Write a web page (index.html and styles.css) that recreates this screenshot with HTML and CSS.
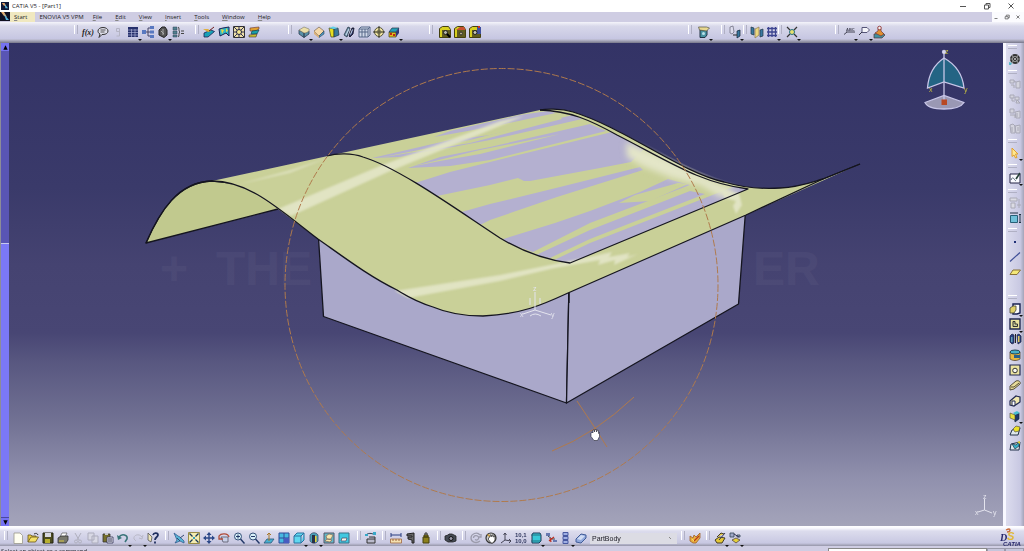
FILE: index.html
```html
<!DOCTYPE html>
<html lang="en">
<head>
<meta charset="utf-8">
<title>CATIA V5 - [Part1]</title>
<link rel="stylesheet" href="styles.css">
</head>
<body>
<header class="titlebar">
  <svg class="app-icon" viewBox="0 0 9 9"><path fill="#101838" d="M0 0h9v9H0z"/><path fill="#e8a060" d="M1 1l3 0 2 4-3-1z"/><path fill="#58b8e0" d="M4 2l4 5H5z"/></svg>
  <h1 class="title">CATIA V5 - [Part1]</h1>
  <div class="window-controls">
    <button aria-label="Minimize"><svg viewBox="0 0 8 8"><path d="M1 4.500h6"/></svg></button>
    <button aria-label="Restore"><svg viewBox="0 0 8 8"><path d="M1.500 3h4v4h-4zM3 3V1.500h4V5.500H5.500"/></svg></button>
    <button aria-label="Close"><svg viewBox="0 0 8 8"><path d="M1.500 1.500l5 5m0-5l-5 5"/></svg></button>
  </div>
</header>

<nav class="menubar">
  <svg class="doc-icon" viewBox="0 0 10 9"><path fill="#101020" d="M0 0h10v9H0z"/><path fill="#e8b070" d="M1 0h3l3 5-3-1z"/><path fill="#58b8e0" d="M4 2l5 6H6z"/></svg>
  <button class="menu menu-start"><u>S</u>tart</button>
  <button class="menu menu-wide">ENOVIA V5 VPM</button>
  <button class="menu"><u>F</u>ile</button>
  <button class="menu"><u>E</u>dit</button>
  <button class="menu"><u>V</u>iew</button>
  <button class="menu"><u>I</u>nsert</button>
  <button class="menu"><u>T</u>ools</button>
  <button class="menu"><u>W</u>indow</button>
  <button class="menu"><u>H</u>elp</button>
  <div class="doc-controls">
    <button aria-label="Minimize document"><svg viewBox="0 0 8 8"><path d="M2 6h4"/></svg></button>
    <button aria-label="Restore document"><svg viewBox="0 0 8 8"><path d="M1.500 3.500h4v3h-4zM3 3V1.500h4V5H5.500"/></svg></button>
    <button aria-label="Close document"><svg viewBox="0 0 8 8"><path d="M2 2l4 4m0-4l-4 4"/></svg></button>
  </div>
</nav>

<div class="toolbar toolbar-top" role="toolbar" aria-label="Main tools">
  <div class="group">
    <button class="tool" aria-label="Formula"><svg viewBox="0 0 12 12"><text class="fx" x="0" y="9">f(x)</text></svg></button>
    <button class="tool" aria-label="Comment"><svg viewBox="0 0 12 12"><path fill="#dcdce8" stroke="#333" d="M6 1.500c3 0 5 1.500 5 3.500S9 8.500 6 8.500H5l-3 3 1-3.500C1.500 7.500 1 6 1 5c0-2 2-3.500 5-3.500z"/><path stroke="#555" d="M3.500 4h5M3.500 6h4"/></svg></button>
    <button class="tool" aria-label="Lock"><svg viewBox="0 0 12 12"><path fill="none" stroke="#b4b4c4" d="M4.500 2.500h3v3h-3zM7.500 5v5h-3"/></svg></button>
    <button class="tool more" aria-label="Design table"><svg viewBox="0 0 12 12"><path fill="#26306c" d="M1 1h10v10H1z"/><path stroke="#b8bce0" stroke-width=".6" d="M1 4h10M1 6.500h10M1 9h10M4.500 3v8M8 3v8"/></svg></button>
    <button class="tool" aria-label="Tree"><svg viewBox="0 0 12 12"><path fill="none" stroke="#446" d="M3 6h3m3-4H6v8h3M6 6h3"/><path fill="#5878c0" d="M0 4h4v4H0zM8 0h4v3H8zM8 4.500h4v3H8zM8 9h4v3H8z"/></svg></button>
    <button class="tool more" aria-label="Knowledge lock"><svg viewBox="0 0 12 12"><path fill="#555" stroke="#222" d="M2 4l3-3h3l2 3v5l-3 2.500L2 9z"/><path stroke="#aaa" d="M4 5l3 3M6 3v6"/></svg></button>
    <button class="tool" aria-label="Equivalent dimensions"><svg viewBox="0 0 12 12"><path fill="#508090" stroke="#345" stroke-width=".5" d="M1 1h4v3H1zM1 5h4v3H1zM1 9h4v2H1z"/><path fill="none" stroke="#444" d="M6 1c2 0 0 5 2 5-2 0 0 5-2 5M9 5h3M9 7.500h3"/></svg></button>
  </div>
  <div class="group">
    <button class="tool" aria-label="Draft analysis"><svg viewBox="0 0 12 12"><path fill="#18a0b8" stroke="#1c2050" stroke-width=".8" d="M1 7l7-3 3.500 1.500L5 11H1z"/><path fill="#e0b040" d="M0 3h5l3 2-3 1z"/><path stroke="#702020" d="M6 5l5-4"/></svg></button>
    <button class="tool" aria-label="Surface curvature"><svg viewBox="0 0 12 12"><path fill="#30b8c8" stroke="#182050" d="M1 3l4-1 6-1v9l-3-3-6 3z"/><path fill="#e8d840" d="M3 3l3 1-2 4zM8 2l2 3-2 1z"/></svg></button>
    <button class="tool" aria-label="Tap and thread analysis"><svg viewBox="0 0 12 12"><path fill="#eee0a8" stroke="#333" d="M.5.5h11v11H.5z"/><path fill="none" stroke="#335" d="M1 1l10 10M11 1L1 11M6 0v12M0 6h12"/><circle cx="6" cy="6" r="2.500" fill="#f6e890" stroke="#224"/></svg></button>
    <button class="tool" aria-label="Wall thickness"><svg viewBox="0 0 12 12"><path fill="#e0a030" stroke="#633" stroke-width=".6" d="M2 2l9-1v2L8 5H2z"/><path fill="#18a0a8" stroke="#134" stroke-width=".6" d="M4 5l7-1-2 4H3z"/><path fill="#c8c030" stroke="#433" stroke-width=".6" d="M1 9l8-1-1 3H1z"/></svg></button>
  </div>
  <div class="group group-loose">
    <button class="tool more" aria-label="Edge fillet"><svg viewBox="0 0 12 12"><path fill="#5890a8" stroke="#2c3c50" stroke-width=".8" d="M1 4l5 3v4.500L1 8zM6 7l5-2v3l-5 3.500z"/><path fill="#ecdfa8" stroke="#776" stroke-width=".6" d="M1 4l5-3 5 2c1 2-2 4-5 4z"/></svg></button>
    <button class="tool" aria-label="Chamfer"><svg viewBox="0 0 12 12"><path fill="#f4d8a8" stroke="#765" stroke-width=".7" d="M1 5l5-4 5 4-5 5z"/><path fill="#4c98c0" stroke="#345" stroke-width=".6" d="M11 5v3l-5 3.500V10z"/><path fill="#d8b078" d="M1 5l5 5v2L1 8z"/></svg></button>
    <button class="tool more" aria-label="Draft angle"><svg viewBox="0 0 12 12"><path fill="#e8e020" stroke="#444420" stroke-width=".7" d="M1 2l5 1v8H3z"/><path fill="#387898" stroke="#234" stroke-width=".7" d="M6 3l4-1 1 7-5 2z"/><path fill="#60d0e8" d="M1 2l4-1.500L10 2 6 3z"/></svg></button>
    <button class="tool" aria-label="Shell"><svg viewBox="0 0 12 12"><path fill="#7898b0" stroke="#234" stroke-width=".8" d="M1 9l4-8 2 1-3 9z"/><path fill="#283060" stroke="#112" stroke-width=".8" d="M6 10l3-8h2l-1 6-3 3z"/><path stroke="#d0e0f0" d="M3 9l3-6M7.500 8.500l2-5"/></svg></button>
    <button class="tool" aria-label="Thickness"><svg viewBox="0 0 12 12"><path fill="#d0d8e8" stroke="#566888" d="M1 3h9v8H1zM1 3l2-2h9l-2 2M12 1v8l-2 2M4 3v8M7 3v8M1 6h9"/></svg></button>
    <button class="tool" aria-label="Thread"><svg viewBox="0 0 12 12"><circle cx="6" cy="6" r="4.500" fill="#f0e4a0" stroke="#554"/><circle cx="6" cy="6" r="2" fill="none" stroke="#665" stroke-width=".7"/><path stroke="#332" d="M6 0v12M0 6h12"/></svg></button>
    <button class="tool more" aria-label="Replace face"><svg viewBox="0 0 12 12"><path fill="#e0c020" stroke="#442" stroke-width=".7" d="M1 6h7v5H1z"/><path fill="#28a0b8" stroke="#234" stroke-width=".7" d="M1 6l3-4h7L8 6z"/><path fill="#303878" d="M8 6l3-4v5l-3 4z"/><path fill="#c02818" d="M2 7h2v2H2zM5 8h2v2H5z"/></svg></button>
  </div>
  <div class="group group-loose">
    <button class="tool" aria-label="Catalog"><svg viewBox="0 0 12 12"><path fill="#d8d020" stroke="#444010" d="M.5 2.500l3-2h6l2 3v8H.5z"/><path fill="#605c20" d="M3 4h8v7H3z"/><circle cx="6.500" cy="6.500" r="2" fill="#b8b8a8" stroke="#222"/><path stroke="#000" stroke-width="2" d="M8 8l3 3"/></svg></button>
    <button class="tool" aria-label="Catalog open"><svg viewBox="0 0 12 12"><path fill="#d8d020" stroke="#444010" d="M.5 2.500l3-2h6l2 3v8H.5z"/><path fill="#605c20" d="M3 4h8v7H3z"/><path fill="#c85030" d="M2 4l4-3h4l1.500 3z"/><circle cx="7" cy="7.500" r="1.500" fill="#b8b080" stroke="#333"/></svg></button>
    <button class="tool" aria-label="Catalog save"><svg viewBox="0 0 12 12"><path fill="#d8d020" stroke="#444010" d="M.5 2.500l3-2h6l2 3v8H.5z"/><path fill="#605c20" d="M3 4h8v7H3z"/><path fill="#4050a0" d="M8 1h4v7H8z"/><path fill="#d03020" d="M9 0h2v2H9z"/><circle cx="6" cy="6.500" r="2" fill="#c8c8b8" stroke="#222"/></svg></button>
  </div>
  <div class="group group-loose">
    <button class="tool more" aria-label="View mode"><svg viewBox="0 0 12 12"><path fill="#4890a0" stroke="#234" d="M2 4h7v5l-2 2.500H2z"/><path fill="#e8d890" stroke="#554" stroke-width=".7" d="M.5 1h8l3 1-3 3-7-1z"/><circle cx="5.500" cy="7.500" r="1.500" fill="#b8e0e8"/></svg></button>
  </div>
  <div class="group">
    <button class="tool more" aria-label="Constraint"><svg viewBox="0 0 12 12"><path fill="#dde" stroke="#667" stroke-width=".7" d="M1 1l3-1 1 6-2 2-2-1z"/><path fill="#3878a0" stroke="#123" stroke-width=".7" d="M8 5l3-1v6l-3 2z"/><path stroke="#222" d="M4 9h4"/></svg></button>
  </div>
  <div class="group">
    <button class="tool" aria-label="Mirror"><svg viewBox="0 0 12 12"><path fill="#3878a0" stroke="#234" stroke-width=".7" d="M0 1l3 1v7l-3-1zM9 4l3-1v7l-3 1z"/><path fill="#ecd880" stroke="#875" stroke-width=".7" d="M4 3l4-2v8l-4 3z"/></svg></button>
    <button class="tool more" aria-label="Pattern"><svg viewBox="0 0 12 12"><path stroke="#3c4490" stroke-width="1.300" d="M1 2.500h10M1 6h10M1 9.500h10M2.500 1v10M6 1v10M9.500 1v10"/></svg></button>
  </div>
  <div class="group">
    <button class="tool more" aria-label="Scaling"><svg viewBox="0 0 12 12"><path stroke="#333" stroke-width="1.200" d="M1 1l3 3M11 1L8 4M1 11l3-3M11 11L8 8"/><circle cx="6" cy="6" r="2.500" fill="#e8e070" stroke="#247080"/></svg></button>
  </div>
  <div class="group">
    <button class="tool more" aria-label="Text with leader"><svg viewBox="0 0 12 12"><text class="abc" x="3" y="5">ABC</text><path fill="none" stroke="#445" d="M3 6h9M4 6L1 8.500"/></svg></button>
    <button class="tool more" aria-label="Flag note"><svg viewBox="0 0 12 12"><path fill="#f4f4fa" stroke="#557" d="M4 1.500h5l2.500 2.500L9 6.500H4z"/><path stroke="#334" d="M4 6L1 9"/></svg></button>
    <button class="tool" aria-label="Stamp"><svg viewBox="0 0 12 12"><path fill="#4090a0" stroke="#533" stroke-width=".7" d="M1 8l9-1 2 2-3 3H1z"/><path fill="#e09030" stroke="#733" stroke-width=".7" d="M2 7l3-2V3h3v2l3 3-3 2z"/><circle cx="6.500" cy="2" r="1.800" fill="#eee" stroke="#944"/></svg></button>
  </div>
</div>

<main class="workspace">
  <div class="scrollbar" role="scrollbar" aria-label="Vertical scroll" aria-controls="scene" aria-valuenow="70">
    <button class="scroll-button" aria-label="Scroll up"><svg viewBox="0 0 8 8"><path d="M4 1.500l2.500 5h-5z"/></svg></button>
    <div class="scroll-track"></div>
    <div class="scroll-thumb"></div>
    <button class="scroll-button" aria-label="Scroll down"><svg viewBox="0 0 8 8"><path d="M4 6.500l2.500-5h-5z"/></svg></button>
  </div>

  <section class="viewport" id="scene" aria-label="3D view">
    <svg class="scene" viewBox="9 43 994 483" role="img" aria-label="Box pad with wavy surface">
      <defs>
        <clipPath id="patch"><path d="M327 156C337 153 352 153 363 157C400 168 463 214 500 238C520 250 545 260 570 263L748 189C700 183 670 162 617 135C590 120 570 111 540 110Z"/></clipPath>
        <clipPath id="sheet"><path d="M212 181L540 110C620 98 670 188 780 188C800 187 812 182 823 179L568 293C555 299 525 313 483 316C400 316 350 260 278 209C250 190 230 182 212 181Z"/></clipPath>
        <filter id="soft" x="-20%" y="-20%" width="140%" height="140%"><feGaussianBlur stdDeviation="1"/></filter>
        <filter id="softer" x="-20%" y="-20%" width="140%" height="140%"><feGaussianBlur stdDeviation="3"/></filter>
      </defs>

      <g class="watermark"><text x="160" y="285">+</text><text x="216" y="285">THE</text><text x="753" y="285">ER</text></g>

      <g class="edge">
        <path fill="#aaa8ca" d="M318 230L323.500 316.500L566.500 403L569 285L430 240Z"/>
        <path fill="#aaa8ca" d="M569 285L566.500 403L738.500 304L746 205Z"/>
        <path fill="#c1c98e" d="M146 243C160 211 178 182 212 181L300 190L278 209Z"/>
      </g>
      <path fill="#c9d098" d="M212 181L540 110C545 109 560 108 573 112C625 128 680 172 724 182C745 188 765 189 780 188C800 187 812 182 823 179L860 164L746 215L568 293C542 305 522 314 483 316C462 316 447 313 433 307C420 303 408 297 397 290C370 277 345 258 318 239L278 209C250 190 230 181 212 181Z"/>

      <g clip-path="url(#patch)" fill="#b4b0d0">
        <path d="M372 158L450 140L490 135L573 115L582 119L490 140L400 157Z"/>
        <path d="M434 137L450 131L520 115L548 111L556 113L490 127Z"/>
        <path d="M408 168L440 157L490 147L590 124L606 131L490 160L450 166Z"/>
        <path d="M415 183L450 172L490 162L612 132L645 148L631 162L600 168L530 181L524 181L518 178L490 185L437 196Z"/>
        <path d="M458 213L490 204L560 187L640 167L643 170L557 197L490 220L478 226Z"/>
        <path d="M500 240L555 223L590 211L640 192L668 179L690 185L590 223L533 252Z"/>
        <path d="M536 255L590 230L690 191L705 194L590 239L550 258Z"/>
        <path d="M552 261L590 243L705 198L735 186L750 190L570 266Z"/>
        <path fill="#c9d098" d="M619 203L635 195L678 183L688 184L650 201Z"/>
        <path fill="#c9d098" d="M378 158L470 140L560 117L562 119L470 143Z"/>
        <path fill="#c9d098" d="M410 167L480 150L560 134L480 154L440 161Z"/>
      </g>

      <g clip-path="url(#sheet)" fill="#e3e5c8">
        <g filter="url(#soft)">
          <path opacity=".9" d="M278 209L291 216L388 172L500 126L524 116L500 121L380 166Z"/>
          <path opacity=".7" d="M236 185L290 170L330 157L290 173Z"/>
          <path opacity=".9" d="M395 291L408 298L500 281L555 268L600 260L598 265L615 260L614 265L638 254L627 257L630 253L609 257L612 252L580 259L500 275Z"/>
          <path opacity=".9" d="M722 190L739 193L742 205L736 214L733 206L736 201L724 198Z"/>
        </g>
        <path filter="url(#softer)" d="M626 142L660 156L720 184L736 189L722 198L700 185L672 178L642 166L627 157Z"/>
      </g>

      <g class="edge">
        <path d="M146 243C160 211 178 182 212 181C250 181 280 210 318 239C345 258 370 277 397 290C408 297 420 303 433 307C447 313 462 316 483 316C522 314 542 305 568 293L746 215L823 179L860 164"/>
        <path d="M540 110C545 109 560 108 573 112C625 128 680 172 724 182C745 188 765 189 780 188C800 187 812 182 823 179L860 164"/>
        <path d="M327 156C337 153 352 153 363 157C400 168 463 214 500 238C520 250 545 260 570 263L748 189C700 183 670 162 617 135C590 120 570 111 540 110"/>
        <path d="M569 293V303"/>
      </g>

      <g class="orbit">
        <circle cx="501.500" cy="285" r="216.500"/>
        <path d="M577 401Q587 416 595 428L607 447M552 451Q595 434 634 397"/>
      </g>

      <g class="origin"><path d="M535 310V292M535 310L523 314M535 310L551 315M530 305V298M540 304V298M530 316Q535 312 541 316"/><text x="533" y="291">z</text><text x="520" y="317">x</text><text x="551" y="317">y</text></g>

      <path fill="#fff" stroke="#223" stroke-width=".6" d="M591 433l1-1 1 1v-3h1.500v2l.5-2.500h1.500v2.500l1-2 1 .500v3l1-1v4l-2 4h-3.500l-3-4z"/>

      <g class="compass">
        <path fill="#246484" d="M944 58Q929 68 927.500 88L944 82L964 88Q962 68 944 58Z"/>
        <path fill="#9a98b4" d="M925 102.500L944 95.500L964 102.500Q960 109 944 109Q928 109 925 102.500Z"/>
        <path d="M944 52V101"/>
        <circle cx="944" cy="52" r="1.500" fill="#e8e8f4"/>
        <path fill="#b84824" stroke="none" d="M941.500 99.500h5.500v5.500h-5.500z"/>
        <text x="945" y="54">z</text><text x="929" y="92">x</text><text x="964" y="92">y</text>
      </g>

      <g class="axes"><path d="M984.500 510V499M984.500 510L978 512M984.500 510L992 513"/><text x="983" y="499">z</text><text x="975" y="515">x</text><text x="993" y="515">y</text></g>
    </svg>
  </section>

  <aside class="sidebar" role="toolbar" aria-label="Part design tools">
    <div class="side-group">
      <button class="tool" aria-label="Workbench"><svg viewBox="0 0 12 12"><circle cx="6" cy="6" r="4" fill="#999" stroke="#333" stroke-width="2"/><circle cx="6" cy="6" r="1.500" fill="#ddd" stroke="#222"/><path stroke="#bbb" stroke-width=".7" d="M3 2l1 2M9 2L8 4M1 6h2M9 6h2M3 10l1-2M9 10L8 8"/><path fill="#58b8c8" d="M0 9l3 1-1 2H0z"/></svg></button>
    </div>
    <div class="side-group disabled">
      <button class="tool" disabled aria-label="Assemble"><svg viewBox="0 0 12 12"><path d="M1 2h4v3H1zM2 7h3v3M5 3l2 1M7 4l4-1v7H7z"/></svg></button>
      <button class="tool" disabled aria-label="Add"><svg viewBox="0 0 12 12"><path d="M1 2h4v3H1zM3 5v3h3M6 4h4v3H6zM8 7l3 3H7z"/></svg></button>
      <button class="tool" disabled aria-label="Remove"><svg viewBox="0 0 12 12"><path d="M1 1h4v4H1zM1 7h5v3M6 4l5-1v7H7zM8 5v4"/></svg></button>
      <button class="tool" disabled aria-label="Intersect"><svg viewBox="0 0 12 12"><path d="M1 2l3-1 2 2v7H2zM6 3l5-1v8H7zM3 4v5M9 4v4"/></svg></button>
    </div>
    <div class="side-group">
      <button class="tool more" aria-label="Select"><svg viewBox="0 0 12 12"><path fill="#ffe890" stroke="#e0a030" d="M3 1l6 6H6.500l1.500 3.500-1.500.5L5 8 3 9.500z"/></svg></button>
    </div>
    <div class="side-group">
      <button class="tool more" aria-label="Sketch"><svg viewBox="0 0 12 12"><path fill="#fafaff" stroke="#224" d="M1 2h10v9H1z"/><path fill="none" stroke="#567" d="M2 8c2-5 3 0 5 1"/><path stroke="#254038" stroke-width="1.600" d="M11 1L7 7"/></svg></button>
    </div>
    <div class="side-group">
      <button class="tool" disabled aria-label="Constraints"><svg viewBox="0 0 12 12"><path fill="#dcdce4" stroke="#aaaab6" d="M1 1h7v3H1zM2 6h4v5H2zM10 2v9M8 8h4"/></svg></button>
      <button class="tool" aria-label="Constraint defined in dialog"><svg viewBox="0 0 12 12"><path fill="#70c0d8" stroke="#286078" d="M1.500 3.500h7v7h-7z"/><path fill="none" stroke="#234" d="M1 1h8M11 2v9M10 2.500h2M10 10.500h2"/></svg></button>
    </div>
    <div class="side-group">
      <button class="tool" aria-label="Point"><svg viewBox="0 0 12 12"><path fill="#203078" d="M5 5h2v2H5z"/></svg></button>
      <button class="tool" aria-label="Line"><svg viewBox="0 0 12 12"><path stroke="#405098" stroke-width="1.200" d="M1 10.500l10-9"/></svg></button>
      <button class="tool" aria-label="Plane"><svg viewBox="0 0 12 12"><path fill="#f4e878" stroke="#887038" d="M4 4h7.500L8 8.500H1z"/></svg></button>
    </div>
    <div class="side-group side-features">
      <button class="tool more" aria-label="Pad"><svg viewBox="0 0 12 12"><path fill="#fafafa" stroke="#182050" stroke-width="1.400" d="M4 1h7v9l-3 1H4z"/><path fill="#e0d068" stroke="#443" stroke-width=".8" d="M1 5l3-2h3v4l-2 3H1z"/></svg></button>
      <button class="tool more" aria-label="Pocket"><svg viewBox="0 0 12 12"><path fill="#ece4a0" stroke="#222850" stroke-width="1.400" d="M1 1h10v10H1z"/><path fill="#c8c898" stroke="#333" d="M4 3.500h2V6h2.500v2.500H4z"/></svg></button>
      <button class="tool" aria-label="Shaft"><svg viewBox="0 0 12 12"><path fill="#2c4080" stroke="#182040" stroke-width=".7" d="M1 3l2-2 2 1v8l-2 1-2-2zM8 2l2-1 2 2v6l-3 2z"/><path fill="#e0c860" d="M9 3h1.500v6H9z"/><path fill="#60a0b8" d="M2 4h1.500v5H2z"/><path stroke="#222" d="M6.500 1v9"/></svg></button>
      <button class="tool" aria-label="Groove"><svg viewBox="0 0 12 12"><path fill="#e8b840" stroke="#543" stroke-width=".8" d="M1 3h10v7c-3 2-7 2-10 0z"/><ellipse cx="6" cy="3" rx="5" ry="2" fill="#48b0c8" stroke="#245"/><path fill="#28608c" d="M5 6h6v3H5z"/></svg></button>
      <button class="tool" aria-label="Hole"><svg viewBox="0 0 12 12"><path fill="#ece4a0" stroke="#222850" stroke-width="1.200" d="M1 1h10v10H1z"/><circle cx="6" cy="6.500" r="2.300" fill="#f8f8f0" stroke="#333"/></svg></button>
      <button class="tool" aria-label="Rib"><svg viewBox="0 0 12 12"><path fill="#e8dc98" stroke="#544c38" d="M1 7l6-5c3-1 5 1 4 3l-6 5-4 1z"/><path fill="none" stroke="#544c38" d="M2 8h3l5-4"/></svg></button>
      <button class="tool" aria-label="Slot"><svg viewBox="0 0 12 12"><path fill="#f0e8b0" stroke="#202850" stroke-width="1.200" d="M1 6l6-5 4 1v5l-6 4-4-1z"/><path fill="#fff" stroke="#202850" d="M3 10V6h3v4"/></svg></button>
      <button class="tool more" aria-label="Solid combine"><svg viewBox="0 0 12 12"><path fill="#203868" stroke="#123" stroke-width=".6" d="M5 5l5-2v6l-4 3z"/><path fill="#48c0d0" d="M4 3l4-2 3 2-5 2z"/><path fill="#e8e040" stroke="#443" stroke-width=".6" d="M1 3l5 2v5L1 8z"/></svg></button>
      <button class="tool" aria-label="Multi-sections solid"><svg viewBox="0 0 12 12"><path fill="#dfe8ec" stroke="#203048" d="M1 10l2-5 8-2-2 7z"/><path fill="#ece028" stroke="#554" stroke-width=".7" d="M4 4l3-3 4 1-1 4-4 1z"/></svg></button>
      <button class="tool" aria-label="Removed multi-sections solid"><svg viewBox="0 0 12 12"><path fill="#dfe8ec" stroke="#203048" d="M1 10l1-6 9-2-1 8z"/><path fill="#38b0c8" stroke="#234" stroke-width=".7" d="M3 4l4 1 3-3v4l-4 3z"/><path fill="#e8d030" d="M8 2l3-1v3z"/></svg></button>
    </div>
  </aside>
</main>

<div class="toolbar toolbar-bottom" role="toolbar" aria-label="Standard tools">
  <div class="group">
    <button class="tool" aria-label="New"><svg viewBox="0 0 12 12"><path fill="#fffef0" stroke="#99988c" stroke-width=".8" d="M2 1h6l2.500 2.500V11.500H2z"/></svg></button>
    <button class="tool" aria-label="Open"><svg viewBox="0 0 12 12"><path fill="#e8cc48" stroke="#665418" stroke-width=".8" d="M1 10V3h3l1 1h4v2"/><path fill="#f4e068" stroke="#665418" stroke-width=".8" d="M1 10l3-5h7.500l-3 5z"/><path fill="none" stroke="#333" d="M7 2c2-1 3-1 4 1"/></svg></button>
    <button class="tool" aria-label="Save"><svg viewBox="0 0 12 12"><path fill="#4c4c20" stroke="#222210" d="M1 1h10v10H1z"/><path fill="#d8d8e0" d="M3 1h6v4H3z"/><path fill="#b8b030" d="M3 7h5v4H3z"/></svg></button>
    <button class="tool" aria-label="Print"><svg viewBox="0 0 12 12"><path fill="#fff" stroke="#555" stroke-width=".7" d="M5 1h5L8 5H3z"/><path fill="#77776c" stroke="#333" stroke-width=".8" d="M1 6l3-2h7v4l-2 3H1z"/><path stroke="#d8c840" d="M2 9h5"/></svg></button>
    <button class="tool" disabled aria-label="Cut"><svg viewBox="0 0 12 12"><path fill="none" stroke="#b0b0be" d="M3 1l4 7M9 1L5 8"/><circle cx="4" cy="9.500" r="1.500" fill="none" stroke="#b0b0be"/><circle cx="8" cy="9.500" r="1.500" fill="none" stroke="#b0b0be"/></svg></button>
    <button class="tool" disabled aria-label="Copy"><svg viewBox="0 0 12 12"><path fill="#d8d8e4" stroke="#acacbc" d="M1 1h6v7H1zM5 4h6v7H5z"/></svg></button>
    <button class="tool" aria-label="Paste"><svg viewBox="0 0 12 12"><path fill="#77702c" stroke="#333" stroke-width=".8" d="M1 2h7v8H1z"/><path fill="#c8c8d0" d="M3 1h3v2H3z"/><path fill="#e8e8f0" stroke="#335" stroke-width=".8" d="M5 5h6v6H5z"/><path stroke="#335" d="M6 7h4M6 9h4"/></svg></button>
    <button class="tool more" aria-label="Undo"><svg viewBox="0 0 12 12"><path fill="none" stroke="#387478" stroke-width="1.600" d="M2 5c3-4 9-2 8 2l-2 3"/><path fill="#387478" d="M0 3l1 5 4-2z"/></svg></button>
    <button class="tool more" disabled aria-label="Redo"><svg viewBox="0 0 12 12"><path fill="none" stroke="#b8b8c6" d="M10 5c-3-4-9-2-8 2l2 2M11 3l-1 4-3-1"/></svg></button>
    <button class="tool" aria-label="What's this"><svg viewBox="0 0 12 12"><path fill="#ece4b8" stroke="#555" stroke-width=".8" d="M1 1l4 4-1 5-3-2z"/><path fill="none" stroke="#203060" stroke-width="1.800" d="M6 3c1-3 5-2 5 0S8 5 8 8M8 9.500v2"/></svg></button>
  </div>
  <div class="group">
    <button class="tool" aria-label="Fly mode"><svg viewBox="0 0 12 12"><path fill="#58b8d8" stroke="#345c90" stroke-width=".8" d="M1 1l4 3 2 1 4 4v2L7 9l-5 2 2-3z"/><path stroke="#344870" d="M11 3L7 6M4 6l3 3"/></svg></button>
    <button class="tool" aria-label="Fit all in"><svg viewBox="0 0 12 12"><path fill="#f4ecb0" stroke="#998c48" d="M.5.500h11v11H.5z"/><path stroke="#183858" stroke-width="1.300" d="M1.500 1.500l3 3M10.500 1.500l-3 3M1.500 10.500l3-3M10.500 10.500l-3-3"/><path fill="#38a0b8" d="M5 5h2v2H5z"/></svg></button>
    <button class="tool" aria-label="Pan"><svg viewBox="0 0 12 12"><path stroke="#2c4888" stroke-width="1.400" d="M6 1v10M1 6h10"/><path fill="#2c4888" d="M6 0l2.500 3h-5zM6 12l2.500-3h-5zM0 6l3-2.500v5zM12 6L9 3.500v5z"/></svg></button>
    <button class="tool" aria-label="Rotate"><svg viewBox="0 0 12 12"><path fill="#c8d0e8" stroke="#556" stroke-width=".8" d="M3 5h7v5H5z"/><path fill="none" stroke="#b04c38" stroke-width="1.300" d="M11 5C10 1 3 1 1 4v3h4"/></svg></button>
    <button class="tool" aria-label="Zoom in"><svg viewBox="0 0 12 12"><circle cx="5" cy="4.500" r="3.500" fill="#d8f0f8" stroke="#345078"/><path stroke="#223868" stroke-width="1.400" d="M7.500 7l4 4.500"/><path stroke="#223868" d="M3 4.500h4M5 2.500v4"/></svg></button>
    <button class="tool" aria-label="Zoom out"><svg viewBox="0 0 12 12"><circle cx="5" cy="4.500" r="3.500" fill="#d8f0f8" stroke="#345078"/><path stroke="#223868" stroke-width="1.400" d="M7.500 7l4 4.500"/><path stroke="#223868" d="M3 4.500h4"/></svg></button>
    <button class="tool" aria-label="Normal view"><svg viewBox="0 0 12 12"><path fill="#48b0d0" stroke="#28587c" stroke-width=".8" d="M4 7h7l-3 4H1z"/><path fill="none" stroke="#a87828" d="M6 9V1M4 3l2-2 2 2"/></svg></button>
    <button class="tool" aria-label="Multi-view"><svg viewBox="0 0 12 12"><path fill="#48b8e0" stroke="#304898" d="M1 1h10v10H1z"/><path stroke="#304898" d="M6 1v10M1 6h10"/><path fill="#485cc0" d="M6 6h5v5H6z"/></svg></button>
    <button class="tool more" aria-label="Isometric view"><svg viewBox="0 0 12 12"><path fill="#60d8f0" stroke="#2870a0" d="M1 4h7v7H1zM1 4l3-3h7L8 4M11 1v7l-3 3"/></svg></button>
    <button class="tool more" aria-label="Shading with edges"><svg viewBox="0 0 12 12"><path fill="#48a0b8" stroke="#445070" stroke-width=".8" d="M2 3c2-3 6-3 8 0v6c-2 3-6 3-8 0z"/><path fill="#283048" d="M4 3h3v8H4z"/><path fill="#e8d038" d="M7 4h1.500v6H7z"/></svg></button>
    <button class="tool" aria-label="Hide or show"><svg viewBox="0 0 12 12"><path fill="#60b8c8" stroke="#556" d="M1 1h10v10H1z"/><path fill="#f4e8b0" stroke="#865" stroke-width=".7" d="M3 4l3-2 4 1-2 4H4zM2 9l2-2 5 1-2 2z"/></svg></button>
    <button class="tool" aria-label="Swap visible space"><svg viewBox="0 0 12 12"><path fill="#40c8e0" stroke="#387088" d="M1 1h10v10H1z"/><path fill="#f4f4e8" stroke="#446" stroke-width=".7" d="M4 6h5L8 9H3z"/></svg></button>
  </div>
  <div class="group">
    <button class="tool" aria-label="Reorder"><svg viewBox="0 0 12 12"><path fill="#bbc" stroke="#333" d="M2 7h8v4H2zM4 5h6v2"/><path fill="none" stroke="#345" d="M1 4c0-3 5-3 7-2"/><path fill="#38a8c8" d="M0 2h3v2H0zM8 0h3v3H8z"/></svg></button>
  </div>
  <div class="group">
    <button class="tool" aria-label="Measure between"><svg viewBox="0 0 12 12"><path stroke="#283c80" d="M1 1v4M11 1v4M1 3h10"/><path fill="#f4e0b0" stroke="#a06840" stroke-width=".8" d="M.5 7h11v4H.5z"/><path stroke="#a06840" d="M3 7v2M6 7v2M9 7v2"/></svg></button>
    <button class="tool" aria-label="Measure item"><svg viewBox="0 0 12 12"><path fill="#666" stroke="#222" d="M2 2l7-1v10H7V8L3 7V5h4V4H2z"/></svg></button>
    <button class="tool" aria-label="Measure inertia"><svg viewBox="0 0 12 12"><path fill="#8c801c" stroke="#444010" d="M3 5h6v6H3zM4 3h4v2H4z"/><path fill="none" stroke="#333" d="M5 3V1h2v2"/></svg></button>
  </div>
  <div class="group">
    <button class="tool" aria-label="Capture"><svg viewBox="0 0 12 12"><path fill="#444a54" stroke="#222" stroke-width=".8" d="M0 4l3-1 1-1h3l4 2v5l-3 1H3L0 8z"/><circle cx="6" cy="6.500" r="2" fill="#99a" stroke="#111"/></svg></button>
  </div>
  <div class="group">
    <button class="tool" disabled aria-label="Update"><svg viewBox="0 0 12 12"><path fill="none" stroke="#9c9cac" stroke-width="1.300" d="M10 3C7-1 1 2 1 6s5 6 9 3M3.500 6c0-3 4-3 5-1S7 9 5 7.500M11 2v3H8"/></svg></button>
    <button class="tool" aria-label="Manual update"><svg viewBox="0 0 12 12"><circle cx="6" cy="6" r="5" fill="#ccc" stroke="#333" stroke-width="1.200"/><path fill="#fff" stroke="#333" stroke-width=".8" d="M4 6l1-3h1v2l1-2h1v2l2-1v4l-2 3H6L3 7z"/><path fill="#d8a030" d="M2 2l3 1-1 2z"/></svg></button>
    <button class="tool" aria-label="Axis system"><svg viewBox="0 0 12 12"><path fill="none" stroke="#445" d="M5 1v7l6 1M5 8l-4 3M3.500 3L5 1l1.500 2M9 7l2 2-2 2"/></svg></button>
    <button class="tool" aria-label="Mean dimensions"><svg viewBox="0 0 12 12"><text class="digits" x="0" y="5">10,1</text><text class="digits" x="0" y="11">10,0</text></svg></button>
    <button class="tool more" aria-label="Create datum"><svg viewBox="0 0 12 12"><path fill="#38c8d8" stroke="#203858" d="M3 1h7l1 2v6l-2 2H2V3z"/><path stroke="#207080" d="M1 3h10M1 9h10"/></svg></button>
    <button class="tool" aria-label="Only current body"><svg viewBox="0 0 12 12"><path fill="#6878b0" d="M1 1h4v3H1zM8 8h4v2H8z"/><path fill="none" stroke="#345" d="M3 4l4 3h3"/><path stroke="#c03020" stroke-width="1.300" d="M4 9l5-4M5 6l1 4"/></svg></button>
    <button class="tool more" aria-label="Current operation"><svg viewBox="0 0 12 12"><path fill="#a0b0e4" stroke="#4858a0" d="M3 .500h5v3H3zM3 4.500h5v3H3zM3 8.500h5v3H3z"/></svg></button>
    <button class="tool" aria-label="Body"><svg viewBox="0 0 12 12"><path fill="#90a8dc" stroke="#405c98" d="M1 7l5-5 5 1v3l-5 5-5-1z"/><path fill="#d0dcf4" d="M2 7l4-4 4 1-4 4z"/></svg></button>
    <select class="body-select" aria-label="Current body"><option>PartBody</option></select>
  </div>
  <div class="group">
    <button class="tool" aria-label="Apply material"><svg viewBox="0 0 12 12"><path fill="#e8b040" stroke="#a06028" stroke-width=".8" d="M1 4l3 2 1-3 2 2 4-4v5l-4 5H4L1 9z"/><path stroke="#b83818" stroke-width="1.200" d="M5 9l5-5"/><path stroke="#f4e060" d="M3 7l2 2"/></svg></button>
  </div>
  <div class="group">
    <button class="tool more" aria-label="Sketch tracer"><svg viewBox="0 0 12 12"><path fill="#e4c838" stroke="#443c28" d="M1 8l4-3 6 1-3 5H3zM3 5l4-4 3 1"/><path stroke="#335" d="M11 1L5 8"/></svg></button>
    <button class="tool more" aria-label="Scan"><svg viewBox="0 0 12 12"><path fill="#a0a8c8" stroke="#345" stroke-width=".8" d="M1 1h4v4H1zM8 3h3v2H8z"/><path fill="#e4d038" stroke="#544" stroke-width=".8" d="M3 8l4-2 4 2-4 3z"/><path fill="none" stroke="#335" d="M5 2l5 3"/></svg></button>
  </div>
  <div class="brand">
    <svg viewBox="0 0 24 20" role="img" aria-label="DS CATIA"><path fill="none" stroke="#c86838" stroke-width="1.300" d="M6 2q4-2 4 0t-3 2"/><text class="brand-d" x="0" y="13">D</text><text class="brand-s" x="7" y="12">S</text><text class="brand-name" x="3" y="18">CATIA</text></svg>
  </div>
</div>

<footer class="statusbar">
  <span class="status-text">Select an object or a command</span>
  <input class="power-input" type="text" aria-label="Power input">
  <button class="status-button" aria-label="Input history"></button>
  <button class="status-button" aria-label="Dialog"></button>
</footer>
</body>
</html>
```
FILE: styles.css
```css
* { box-sizing: border-box; }

body {
  margin: 0;
  height: 100vh;
  display: flex;
  flex-direction: column;
  overflow: hidden;
  background: #cfcde3;
  color: #1c1c24;
  font: 6px/9px "Open Sans", "Noto Sans", sans-serif;
}

button, input, select {
  margin: 0;
  padding: 0;
  border: 0;
  background: none;
  color: inherit;
  font: inherit;
}

svg { display: block; }

.titlebar {
  flex: none;
  display: flex;
  align-items: center;
  gap: 3px;
  height: 12px;
  padding-left: 1px;
  background: #fff;
}
.app-icon { width: 8px; height: 8px; }
.title { margin: 0; font-size: 6px; font-weight: 400; }

.window-controls { display: flex; gap: 16px; margin-left: auto; padding-right: 9px; }
.window-controls svg { width: 8px; height: 8px; }
.window-controls path, .doc-controls path { fill: none; stroke: #555; stroke-width: 1; }

.menubar {
  flex: none;
  display: flex;
  align-items: stretch;
  height: 10px;
  background: #cfcde3;
}
.doc-icon { width: 10px; height: 9px; }
.menu { margin-right: 13px; white-space: nowrap; }
.menu-start { margin-right: 4px; padding: 0 8px 0 4px; background: #f0e8c0; }
.menu-wide { margin-right: 9px; }
.menu u { text-underline-offset: 1px; text-decoration-thickness: 1px; text-decoration-color: #888; }

.doc-controls { display: flex; align-items: center; gap: 5px; margin-left: auto; padding: 0 3px 0 1px; background: #fbfbfe; }
.doc-controls svg { width: 6px; height: 6px; }

.toolbar { flex: none; display: grid; align-items: center; height: 20px; }
.toolbar-top {
  height: 21px;
  padding-bottom: 1px;
  grid-template-columns: 74fr 121fr 93fr 141fr 259fr 33fr 22fr 35fr 57fr 189fr;
  background: linear-gradient(#f4f4fa, #d8d8ea 20%, #c6c6e2 80%, #b8b8cc 85%, #77778a);
}
.toolbar-top .group:first-child { grid-column: 2; }
.toolbar-bottom {
  grid-template-columns: 161fr 192fr 25fr 55fr 25fr 219fr 25fr 294fr 24px;
  padding: 2px 0 0 4px;
  background: linear-gradient(#fff, #fafaff 10%, #dcdced 25%, #c8c8e2 85%, #9696a8);
}

.group { display: flex; align-items: center; min-width: 0; }
.group::before {
  content: "";
  flex: none;
  width: 2px;
  height: 9px;
  margin: 0 2px 6px 0;
  border-left: 1px solid #fff;
  border-right: 1px solid #b0b0c4;
}
.group-loose::before { margin-right: 4px; }

.tool { position: relative; flex: none; display: grid; place-items: center; width: 15px; height: 15px; }
.tool svg { width: 12px; height: 12px; overflow: visible; }
.more::after {
  content: "";
  position: absolute;
  right: -2px;
  bottom: -1px;
  border: 2px solid transparent;
  border-top-color: #111;
  border-bottom: 0;
}
.fx { font: italic bold 8px "Liberation Serif", serif; fill: #222; }
.abc { font: bold 4px "Liberation Sans", sans-serif; fill: #445; }
.digits { font: bold 6px "Liberation Sans", sans-serif; fill: #333a60; }

.body-select {
  flex: none;
  width: 87px;
  height: 11px;
  margin-left: 2px;
  padding: 0 2px;
  appearance: none;
  border-radius: 0;
  font-family: "Liberation Sans", sans-serif;
  font-size: 7px;
  background:
    linear-gradient(45deg, transparent 50%, #888 50%, #888 65%, transparent 65%) right 5px center / 3px 3px no-repeat,
    linear-gradient(-45deg, transparent 50%, #888 50%, #888 65%, transparent 65%) right 2px center / 3px 3px no-repeat,
    #dcdce4;
}

.brand { grid-column: 9; }
.brand svg { width: 24px; height: 20px; overflow: visible; }
.brand-d { font: italic bold 10px "Liberation Serif", serif; fill: #28286c; }
.brand-s { font: italic bold 11px "Liberation Sans", sans-serif; fill: #e0b838; }
.brand-name { font: italic bold 6px "Liberation Sans", sans-serif; fill: #28286c; }

.workspace {
  flex: 1;
  min-height: 0;
  display: grid;
  grid-template-columns: 9px minmax(0, 1fr) 21px;
}

.scrollbar {
  display: grid;
  grid-template-rows: 8px 192fr 275fr 8px;
  border-left: 1px solid #8c8c98;
  background: #5955b4;
}
.scroll-button { display: grid; place-items: center; background: #7572f2; }
.scroll-button svg { width: 7px; height: 7px; }
.scroll-thumb { border-top: 1px solid #c8c8ee; border-bottom: 1px solid #4a48a0; background: #7b78f6; }

.viewport {
  min-height: 0;
  overflow: hidden;
  background: linear-gradient(#333366, #3a3a6a 30%, #454371 46%, #484674 60%, #585780 66%, #717193 78%, #9090ad 90%, #a4a4ba);
}
.scene { width: 100%; height: 100%; }
.edge { fill: none; stroke: #15151f; stroke-width: 1.300; stroke-linejoin: round; }
.watermark { fill: #fff; opacity: .03; font: bold 48px "Liberation Sans", sans-serif; }
.orbit { fill: none; stroke: #b07a4c; stroke-width: 1; }
.orbit circle { stroke-dasharray: 7 2; }
.compass { fill: none; stroke: #c8c6e8; stroke-width: 1.300; }
.compass text { fill: #c8c040; stroke: none; font: 7px "Liberation Sans", sans-serif; }
.origin, .axes { fill: none; stroke: #e4e4ee; stroke-width: 1; }
.origin text, .axes text { fill: #e4e4ee; stroke: none; font: 7px "Liberation Sans", sans-serif; }

.sidebar {
  display: grid;
  grid-template-rows: 25fr 69fr 25fr 25fr 39fr 67fr 159fr 72fr;
  justify-content: center;
  padding-top: 2px;
  border-left: 3px solid #f8f8ff;
  background: linear-gradient(90deg, #dcdcee, #c8c8e2 80%, #a4a4b8);
}
.side-group { display: flex; flex-direction: column; min-height: 0; }
.side-group::before {
  content: "";
  flex: none;
  width: 9px;
  height: 2px;
  margin-bottom: 2px;
  border-top: 1px solid #fff;
  border-bottom: 1px solid #b0b0c4;
}
.side-group .more::after { right: 0; }
.side-features { justify-content: space-between; }
.disabled path { fill: #d4d4de; stroke: #a8a8b6; }

.statusbar {
  flex: none;
  display: grid;
  grid-template-columns: minmax(0, 1fr) 159px 18px 19px;
  height: 5px;
  overflow: hidden;
  background: #cfcde3;
}
.status-text { padding: 1px 0 0 1px; white-space: nowrap; }
.power-input { height: 9px; margin-top: 2px; border: 1px solid #888; background: #fff; }
.status-button { height: 9px; margin-top: 2px; border: 1px solid #9a9aac; background: #c6c6dc; }
```
